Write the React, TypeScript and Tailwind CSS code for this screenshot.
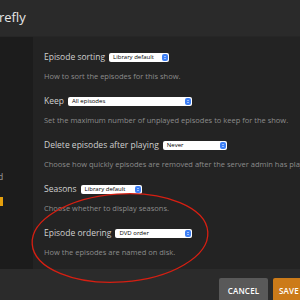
import React from 'react';

const font = { fontFamily: '"Open Sans", "Liberation Sans", sans-serif' };

function Select({ value, width }: { value: string; width: string }) {
  return (
    <div
      className={`relative flex items-center h-[9px] bg-white rounded-[2px] pl-[4px] text-[6px] leading-none text-black ${width}`}
    >
      <span>{value}</span>
      <div className="absolute right-[1px] top-[1px] bottom-[1px] w-[6px] rounded-[2px] bg-[#3d7ff5] flex flex-col items-center justify-center gap-[1px]">
        <div className="w-0 h-0 border-l-[1.5px] border-r-[1.5px] border-b-[1.5px] border-l-transparent border-r-transparent border-b-white" />
        <div className="w-0 h-0 border-l-[1.5px] border-r-[1.5px] border-t-[1.5px] border-l-transparent border-r-transparent border-t-white" />
      </div>
    </div>
  );
}

function Setting({ label, value, width, desc }: { label: string; value: string; width: string; desc: string }) {
  return (
    <div className="h-[44px]">
      <div className="flex items-center h-[12px] gap-[4px]">
        <span className="text-[8.5px] text-[#d0d0d0] whitespace-nowrap">{label}</span>
        <Select value={value} width={width} />
      </div>
      <div className="mt-[7px] h-[12px] leading-[12px] text-[7.5px] text-[#8c8c8c] whitespace-nowrap">{desc}</div>
    </div>
  );
}

export default function App() {
  return (
    <div className="relative w-[300px] h-[300px] overflow-hidden flex flex-col bg-[#2b2b2b]" style={font}>
      {/* Header */}
      <div className="h-[37px] shrink-0 flex items-center bg-[#2a2a2a] border-b border-[#262626]">
        <span className="text-[13px] text-[#e6e6e6] -ml-[1px]">refly</span>
      </div>

      {/* Body */}
      <div className="h-[232px] shrink-0 flex">
        <div className="w-[33px] shrink-0 bg-[#1c1c1c] relative">
          <span className="absolute left-[-12px] top-[134px] text-[8.5px] text-[#a0a0a0]">and</span>
          <div className="absolute left-0 top-[160px] w-[3px] h-[9px] bg-[#e5a00d]" />
        </div>
        <div className="flex-1 bg-[#232323] pl-[11px] pt-[14px] overflow-hidden">
          <Setting
            label="Episode sorting"
            value="Library default"
            width="w-[60px]"
            desc="How to sort the episodes for this show."
          />
          <Setting
            label="Keep"
            value="All episodes"
            width="w-[124px]"
            desc="Set the maximum number of unplayed episodes to keep for the show."
          />
          <Setting
            label="Delete episodes after playing"
            value="Never"
            width="w-[64px]"
            desc="Choose how quickly episodes are removed after the server admin has played them."
          />
          <Setting
            label="Seasons"
            value="Library default"
            width="w-[61px]"
            desc="Choose whether to display seasons."
          />
          <Setting
            label="Episode ordering"
            value="DVD order"
            width="w-[77px]"
            desc="How the episodes are named on disk."
          />
        </div>
      </div>

      {/* Footer */}
      <div className="flex-1 bg-[#2b2b2b] flex justify-end items-start pt-[9px] gap-[5px] -mr-[20px]">
        <button className="w-[49px] h-[26px] rounded-[2px] bg-[#595959] text-white text-[8px] font-semibold tracking-wide">
          CANCEL
        </button>
        <button className="w-[47px] h-[26px] rounded-[2px] bg-[#cc7b19] text-white text-[8px] font-semibold tracking-wide text-left pl-[6px]">
          SAVE
        </button>
      </div>

      {/* Annotation */}
      <svg className="absolute inset-0 pointer-events-none" width="300" height="300" viewBox="0 0 300 300">
        <ellipse
          cx="120"
          cy="238"
          rx="88"
          ry="44"
          transform="rotate(-4 120 238)"
          fill="none"
          stroke="#d61f12"
          strokeWidth="1.3"
        />
      </svg>
    </div>
  );
}
